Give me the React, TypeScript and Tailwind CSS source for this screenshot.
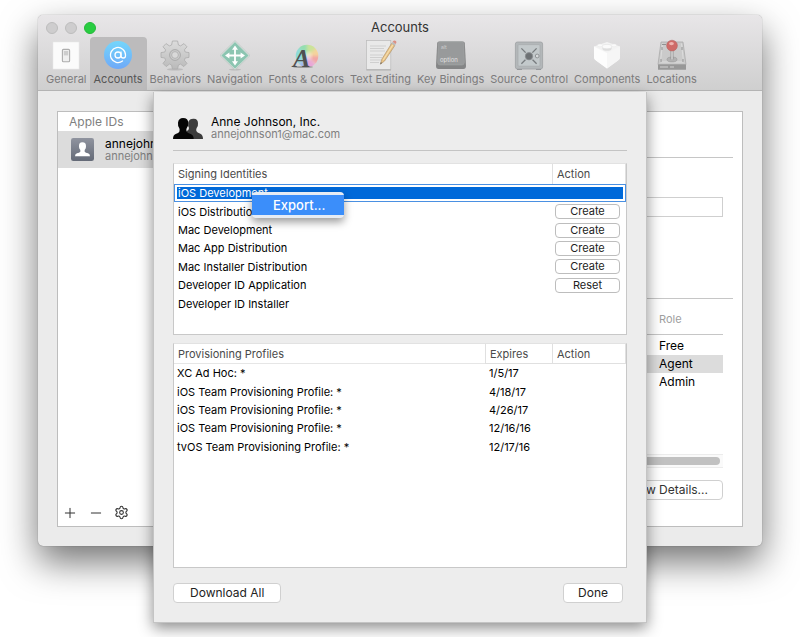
import React from 'react';
import { AtSign, Minus, Plus, Settings } from 'lucide-react';

interface ToolbarItem {
    label: string;
    icon: React.ReactNode;
    active?: boolean;
}

interface Identity {
    name: string;
    action?: string;
    selected?: boolean;
}

const GeneralIcon = () => (
    <svg viewBox="0 0 32 32" className="h-8 w-8">
        <rect x="3" y="3" width="26" height="27" fill="#fbfbfb" stroke="#e9e9e9" strokeWidth="0.6" />
        <rect x="12.4" y="10.4" width="7.2" height="12.4" rx="1" fill="#efefef" stroke="#adadad" strokeWidth="1.1" />
        <rect x="13.8" y="12" width="4.4" height="4.4" fill="#cdcdcd" />
    </svg>
);

const AccountsIcon = () => (
    <span className="m-[2px] flex h-7 w-7 items-center justify-center rounded-full bg-linear-to-b from-[#74d6fb] to-[#6fa9f8] text-white">
        <AtSign size={18} strokeWidth={1.7} />
    </span>
);

const BehaviorsIcon = () => (
    <svg viewBox="0 0 32 32" className="h-8 w-8">
        <defs>
            <linearGradient id="gear" x1="0" y1="0" x2="0" y2="1">
                <stop offset="0" stopColor="#dcdcdc" />
                <stop offset="1" stopColor="#bababa" />
            </linearGradient>
        </defs>
        <ellipse cx="16" cy="30.4" rx="8" ry="1.2" fill="#aaa" opacity="0.6" />
        <path
            d="M13.4 2 H18.6 L19.4 6 L21.6 6.900 L25 4.600 L28 7.800 L25.400 10.800 L26.200 13 L30 13.600 V18.400 L26.200 19 L25.400 21.200 L28 24.400 L24.800 27.600 L21.600 25.100 L19.400 26 L18.600 30 H13.400 L12.600 26 L10.400 25.100 L7.200 27.600 L4 24.400 L6.600 21.200 L5.800 19 L2 18.400 V13.600 L5.800 13 L6.600 10.800 L4 7.800 L7 4.600 L10.400 6.900 L12.600 6 Z"
            fill="url(#gear)"
            stroke="#acacac"
            strokeWidth="0.8"
            strokeLinejoin="round"
        />
        <circle cx="16" cy="16" r="5.4" fill="#cbcbcb" stroke="#a6a6a6" strokeWidth="0.9" />
        <circle cx="16" cy="16" r="3.4" fill="#d9d9d9" stroke="#b0b0b0" strokeWidth="0.9" />
    </svg>
);

const NavigationIcon = () => (
    <svg viewBox="0 0 32 32" className="h-8 w-8">
        <ellipse cx="16" cy="30.6" rx="6" ry="1" fill="#aaa" opacity="0.6" />
        <path d="M16 1.6 L31 16.5 L16 31 L1 16.5 Z" fill="#dce4e0" stroke="#b4bcb8" strokeWidth="0.6" strokeLinejoin="round" />
        <path d="M16 3 L29.6 16.5 L16 29.8 L2.4 16.5 Z" fill="#8cc5b1" />
        <path d="M16 9 V24 M8.5 16.5 H23.5" stroke="#fff" strokeWidth="1.8" />
        <path d="M16 6.4 L19 10.8 H13 Z M16 26.6 L13 22.2 H19 Z M6 16.5 L10.4 13.5 V19.5 Z M26 16.5 L21.6 13.5 V19.5 Z" fill="#fff" />
    </svg>
);

const FontsIcon = () => (
    <svg viewBox="0 0 32 32" className="h-8 w-8 overflow-visible">
        <defs>
            <clipPath id="wheel"><circle cx="17" cy="17" r="11.3" /></clipPath>
            <filter id="soften"><feGaussianBlur stdDeviation="1.5" /></filter>
        </defs>
        <g clipPath="url(#wheel)">
            <rect width="32" height="32" fill="#e6dcd6" />
            <g filter="url(#soften)">
                <path d="M17 17 L4 4 H17 Z" fill="#94deb0" />
                <path d="M17 17 V2 H31 V6 Z" fill="#cbe39a" />
                <path d="M17 17 L31 5 V18 Z" fill="#f4d49c" />
                <path d="M17 17 L32 17 V30 Z" fill="#f2a6a6" />
                <path d="M17 17 L29 30 H16 Z" fill="#e9a6d8" />
                <path d="M17 17 L17 31 H4 Z" fill="#9db5ee" />
                <path d="M17 17 L3 30 V3 Z" fill="#8edbd8" />
            </g>
            <circle cx="18" cy="17" r="4" fill="#fff" opacity="0.4" filter="url(#soften)" />
        </g>
        <ellipse cx="13" cy="28" rx="10" ry="1" fill="#777" opacity="0.6" />
        <text x="3" y="28" fontSize="26" fontStyle="italic" fontWeight="700" fontFamily="Liberation Serif, serif" fill="#505050">A</text>
    </svg>
);

const TextEditingIcon = () => (
    <svg viewBox="0 0 32 32" className="h-8 w-8">
        <rect x="1.4" y="1.6" width="24.4" height="29" fill="#e9e9e9" stroke="#bababa" strokeWidth="0.7" />
        <path d="M1.4 31 H26" stroke="#a4a4a4" strokeWidth="0.8" />
        <path d="M5 7 H21 M5 9.5 H19 M5 12 H20 M5 16 H18 M5 18.5 H17 M5 21 H16 M5 23.5 H14" stroke="#cfcfcf" strokeWidth="1" />
        <path d="M15.4 25.2 L16.8 20.2 L26.6 4.4 L29.8 6.6 L19.6 22 Z" fill="#e8c285" stroke="#a98c62" strokeWidth="0.6" />
        <path d="M18.2 21 L28 5.6" stroke="#f6deae" strokeWidth="1.1" />
        <path d="M26.6 4.4 L27.6 2.8 L30.8 4.9 L29.8 6.6 Z" fill="#bcbcbc" />
        <path d="M27.6 2.8 Q29 0.7 31 2 Q32 3.2 30.8 4.9 Z" fill="#db8f83" />
        <path d="M15.4 25.2 L15.9 23.2 L17 24 Z" fill="#555" />
    </svg>
);

const KeyBindingsIcon = () => (
    <svg viewBox="0 0 32 32" className="h-8 w-8">
        <path d="M4 2.4 H28 Q29.6 2.4 29.8 4 L31 27 Q31 30 28.4 30 H3.6 Q1 30 1 27 L2.2 4 Q2.4 2.4 4 2.4 Z" fill="#848586" />
        <path d="M5 2.8 H27 Q28.6 2.8 28.8 4.4 L29.4 23.6 Q29.2 26 27 26 H5 Q2.8 26 2.6 23.6 L3.2 4.4 Q3.4 2.8 5 2.8 Z" fill="#989a9b" stroke="#a6a8a8" strokeWidth="0.5" />
        <text x="6" y="9.5" fontSize="5" fontFamily="Inter, sans-serif" fill="#cfcfcf">alt</text>
        <text x="5" y="23" fontSize="6" fontFamily="Inter, sans-serif" fill="#e0e0e0">option</text>
    </svg>
);

const SourceControlIcon = () => (
    <svg viewBox="0 0 32 32" className="h-8 w-8">
        <path d="M4 29 H9 V31 H4 Z M23 29 H28 V31 H23 Z" fill="#8f9294" />
        <rect x="2.4" y="3" width="27.2" height="27" rx="2" fill="#b3b7b9" stroke="#9ea1a3" strokeWidth="0.8" />
        <rect x="5" y="5.6" width="22" height="21.6" rx="1" fill="#c3c9cb" stroke="#a6abad" strokeWidth="0.7" />
        <path d="M8.4 9.4 L23.6 24.8 M23.6 9.4 L8.4 24.8" stroke="#777b7e" strokeWidth="1.3" />
        <circle cx="16" cy="17.2" r="5" fill="#c3c9cb" />
        <circle cx="16" cy="17.2" r="3.7" fill="#6d7174" stroke="#8d9193" strokeWidth="0.8" />
        <circle cx="24.2" cy="17" r="1.9" fill="#d7dadb" stroke="#888c8f" strokeWidth="0.9" />
    </svg>
);

const ComponentsIcon = () => (
    <svg viewBox="0 0 32 32" className="h-8 w-8">
        <path d="M3 7.5 L16 3 L29 7.5 V19 Q28.6 20.4 27 21.600 L16 29.6 L5 21.6 Q3.4 20.4 3 19 Z" fill="#f3f3f3" />
        <path d="M3 7.5 L16 14 V29.6 L5 21.6 Q3.4 20.4 3 19 Z" fill="#fdfdfd" />
        <path d="M29 7.5 L16 14 V29.6 L27 21.6 Q28.6 20.4 29 19 Z" fill="#f6f6f6" />
        <ellipse cx="16" cy="9.4" rx="4.6" ry="2.4" fill="#dedede" />
        <ellipse cx="16" cy="7.6" rx="4.6" ry="2.2" fill="#fafafa" stroke="#dedede" strokeWidth="0.5" />
        <ellipse cx="9" cy="6.4" rx="2.6" ry="1.4" fill="#fafafa" stroke="#e6e6e6" strokeWidth="0.4" />
        <ellipse cx="23" cy="6.4" rx="2.6" ry="1.4" fill="#fafafa" stroke="#e6e6e6" strokeWidth="0.4" />
    </svg>
);

const LocationsIcon = () => (
    <svg viewBox="0 0 32 32" className="h-8 w-8">
        <path d="M5 3 H27 L30 25.5 H2 Z" fill="#cacaca" stroke="#a5a5a5" strokeWidth="0.7" />
        <path d="M6.5 4.5 L4.5 23 H27.5 L25.5 4.5" fill="none" stroke="#dedede" strokeWidth="0.9" />
        <rect x="2" y="25.4" width="28" height="5.4" rx="0.6" fill="#989898" />
        <path d="M4 28 H12 M14 28 H18" stroke="#b5b5b5" strokeWidth="2" />
        <path d="M6 5.5 H10 M6 8 V11 M26 8 V11 M5 20 V23 M27 20 V23" stroke="#8a8a8a" strokeWidth="0.9" />
        <ellipse cx="16" cy="20.5" rx="5" ry="2.4" fill="#b2b2b2" stroke="#999" strokeWidth="0.6" />
        <path d="M16 11 V20.5" stroke="#8a8a8a" strokeWidth="2.8" />
        <path d="M16 11 V20.5" stroke="#ececec" strokeWidth="1.2" />
        <circle cx="16" cy="6.6" r="5.4" fill="#cf6b68" stroke="#b0605e" strokeWidth="0.5" />
        <ellipse cx="15.5" cy="4.6" rx="2.4" ry="1.7" fill="#efb4b0" />
    </svg>
);

const TeamIcon = () => (
    <svg viewBox="0 0 90 63" className="h-[21px] w-[30px] shrink-0">
        <path d="M61 2 Q75 1 75 16 Q76 24 71 30 Q69 33 70 39 Q72 44 82 47 Q90 51 90 63 H40 V40 Q48 38 48 30 Q44 24 46 12 Q49 2 61 2 Z" fill="#3c3c3c" />
        <path d="M30 0 Q46 0 46 16 Q46 25 41 31 Q39 35 41 41 Q44 45 53 48 Q62 51 62 63 H0 Q0 51 8 48 Q17 45 19 41 Q21 35 19 31 Q14 25 15 14 Q17 0 30 0 Z" fill="#050505" />
    </svg>
);

const UserIcon = () => (
    <svg viewBox="0 0 69 69" className="h-[23px] w-[23px] shrink-0">
        <defs>
            <linearGradient id="user" x1="0" y1="0" x2="0" y2="1">
                <stop offset="0" stopColor="#90949f" />
                <stop offset="1" stopColor="#646a77" />
            </linearGradient>
        </defs>
        <rect width="69" height="69" rx="7" fill="url(#user)" />
        <path d="M34 13 Q46 13 45 26 Q45 32 41 36 V41 Q44 44 51 46 Q57 48 57 55 H12 Q12 48 18 46 Q25 44 28 41 V36 Q24 32 24 26 Q23 13 34 13 Z" fill="#fff" />
    </svg>
);

const toolbarItems: ToolbarItem[] = [
    { label: 'General', icon: <GeneralIcon /> },
    { label: 'Accounts', icon: <AccountsIcon />, active: true },
    { label: 'Behaviors', icon: <BehaviorsIcon /> },
    { label: 'Navigation', icon: <NavigationIcon /> },
    { label: 'Fonts & Colors', icon: <FontsIcon /> },
    { label: 'Text Editing', icon: <TextEditingIcon /> },
    { label: 'Key Bindings', icon: <KeyBindingsIcon /> },
    { label: 'Source Control', icon: <SourceControlIcon /> },
    { label: 'Components', icon: <ComponentsIcon /> },
    { label: 'Locations', icon: <LocationsIcon /> },
];

const identities: Identity[] = [
    { name: 'iOS Development', selected: true },
    { name: 'iOS Distribution', action: 'Create' },
    { name: 'Mac Development', action: 'Create' },
    { name: 'Mac App Distribution', action: 'Create' },
    { name: 'Mac Installer Distribution', action: 'Create' },
    { name: 'Developer ID Application', action: 'Reset' },
    { name: 'Developer ID Installer' },
];

const profiles = [
    { name: 'XC Ad Hoc: *', expires: '1/5/17' },
    { name: 'iOS Team Provisioning Profile: *', expires: '4/18/17' },
    { name: 'iOS Team Provisioning Profile: *', expires: '4/26/17' },
    { name: 'iOS Team Provisioning Profile: *', expires: '12/16/16' },
    { name: 'tvOS Team Provisioning Profile: *', expires: '12/17/16' },
];

const TitleBar = () => (
    <header className="rounded-t-[5px] border-b border-[#b4b4b4] bg-linear-to-b from-[#e8e6e8] to-[#cfcfcf]">
        <div className="relative flex h-[22px] items-center justify-center pt-1">
            <div className="absolute left-2 flex gap-[7px]">
                <button aria-label="Close" className="h-3 w-3 rounded-full border border-[#bdbdbd] bg-[#cecdce]" />
                <button aria-label="Minimize" className="h-3 w-3 rounded-full border border-[#bdbdbd] bg-[#cecdce]" />
                <button aria-label="Zoom" className="h-3 w-3 rounded-full border border-[#24b93a] bg-[#28cd41]" />
            </div>
            <h1 className="text-[13px] text-[#333]">Accounts</h1>
        </div>
        <nav className="flex pl-[5px]">
            {toolbarItems.map(item => (
                <button
                    key={item.label}
                    className={
                        item.active
                            ? 'flex flex-col items-center rounded-t-[4px] bg-[#bcbbbc] px-1 pt-[2px] pb-[2px] text-[11px] leading-[17px] text-[#555]'
                            : 'flex flex-col items-center px-[3px] pt-[2px] pb-[2px] text-[11px] leading-[17px] text-[#7c7b7c]'
                    }
                >
                    {item.icon}
                    <span className="whitespace-nowrap">{item.label}</span>
                </button>
            ))}
        </nav>
    </header>
);

const AccountList = () => (
    <aside className="flex w-[180px] flex-col border border-[#bdbdbd] bg-white">
        <h2 className="pt-px pl-[11px] text-[12px] leading-[18px] text-[#808080]">Apple IDs</h2>
        <div className="flex h-[37px] items-center gap-[11px] bg-[#dcdcdc] pl-[13px]">
            <UserIcon />
            <div>
                <p className="text-[12px] leading-[13px] text-black">annejohnson1</p>
                <p className="text-[11px] leading-[13px] text-[#808080]">annejohnson1@mac.com</p>
            </div>
        </div>
        <div className="mt-auto flex items-center gap-[10px] px-1 pb-[5px] text-[#333]">
            <button aria-label="Add account"><Plus size={16} strokeWidth={1.5} /></button>
            <button aria-label="Remove account"><Minus size={16} strokeWidth={1.5} /></button>
            <button aria-label="Account options"><Settings size={15} strokeWidth={1.7} /></button>
        </div>
    </aside>
);

const AccountDetail = () => (
    <section className="flex-1 border border-l-0 border-[#bdbdbd] bg-white pr-[9px] pb-[26px]">
        <div className="h-[46px] border-b border-[#c6c6c6]" />
        <div className="h-[141px] border-b border-[#c6c6c6] pt-[39px] pr-[10px]">
            <label className="flex items-center gap-2 pl-10 text-[12px]">
                Description
                <input type="text" className="h-5 min-w-0 flex-1 border border-[#cfcfcf] bg-white" />
            </label>
        </div>
        <div className="pr-[10px]">
            <table className="w-full text-left">
                <thead>
                    <tr className="h-[35px] border-b border-[#c6c6c6] text-[11px] text-[#a0a0a0]">
                        <th className="pt-[6px] font-normal">Team Name</th>
                        <th className="w-16 pt-[6px] font-normal">Role</th>
                    </tr>
                </thead>
                <tbody className="text-[12px] leading-[18px] text-black">
                    <tr>
                        <td className="pt-[2px]"></td>
                        <td className="pt-[2px]">Free</td>
                    </tr>
                    <tr className="bg-[#dcdcdc]">
                        <td></td>
                        <td>Agent</td>
                    </tr>
                    <tr>
                        <td></td>
                        <td>Admin</td>
                    </tr>
                </tbody>
            </table>
            <div className="mt-[63px] border-y border-[#ececec] bg-[#fafafa] px-[3px] py-[2px]">
                <div className="h-2 rounded-full bg-[#c1c1c1]" />
            </div>
            <div className="mt-3 flex justify-end">
                <button className="h-5 rounded-[4px] border border-[#d0d0d0] bg-white px-[14px] text-[12px] leading-[18px] text-[#333]">
                    View Details...
                </button>
            </div>
        </div>
    </section>
);

const ContextMenu = () => (
    <div className="absolute top-7 left-[78px] w-[92px] rounded-[4px] bg-[#e6ecf4] py-[3px] shadow-[0_4px_9px_rgba(0,0,0,0.4)]">
        <button className="block h-5 w-full bg-[#3b8efa] pl-[21px] text-left text-[13px] leading-5 font-medium text-white">Export...</button>
    </div>
);

const IdentityTable = () => (
    <div className="relative min-h-[172px] border border-[#c8c8c8] border-t-[#e2e2e2] bg-white">
        <table className="w-full border-separate border-spacing-0 text-left text-[11px] leading-[14px]">
            <thead className="text-[#4a4a4a]">
                <tr className="h-5">
                    <th className="pl-1 font-normal">Signing Identities</th>
                    <th className="w-[74px] border-x border-[#e0e0e0] pl-1 font-normal">Action</th>
                </tr>
            </thead>
        </table>
        <table className="h-[129px] w-full border-separate border-spacing-0 text-left text-[11px] leading-[14px] text-black">
            <tbody>
                {identities.map(identity => identity.selected ? (
                    <tr key={identity.name} className="h-[18px] outline-1 -outline-offset-1 outline-[#4a90e2]">
                        <td className="p-0 pl-[3px]">
                            <div className="h-3 bg-[#0069d9] pl-px leading-3 text-white">{identity.name}</div>
                        </td>
                        <td className="w-[74px] p-0 pr-[3px]">
                            <div className="h-3 bg-[#0069d9]" />
                        </td>
                    </tr>
                ) : (
                    <tr key={identity.name} className="h-[18px]">
                        <td className="p-0 pl-1">{identity.name}</td>
                        <td className="w-[74px] p-0 pl-[3px]">
                            {identity.action && (
                                <button className="block h-[15px] w-[65px] rounded-[4px] border border-[#bdbdbd] bg-white text-[11px] leading-[13px] text-[#222]">
                                    {identity.action}
                                </button>
                            )}
                        </td>
                    </tr>
                ))}
            </tbody>
        </table>
        <ContextMenu />
    </div>
);

const ProfileTable = () => (
    <div className="min-h-[225px] border border-[#c8c8c8] border-t-[#e2e2e2] bg-white">
        <table className="h-[112px] w-full border-separate border-spacing-0 text-left text-[11px] leading-[14px] text-black">
            <thead className="text-[#4a4a4a]">
                <tr className="h-5">
                    <th className="border-b border-[#e6e6e6] pl-1 font-normal">Provisioning Profiles</th>
                    <th className="w-[67px] border-b border-l border-[#e0e0e0] pl-1 font-normal">Expires</th>
                    <th className="w-[74px] border-x border-b border-[#e0e0e0] pl-1 font-normal">Action</th>
                </tr>
            </thead>
            <tbody>
                {profiles.map((profile, index) => (
                    <tr key={index}>
                        <td className="p-0 pl-[3px]">{profile.name}</td>
                        <td className="p-0 pl-1">{profile.expires}</td>
                        <td className="p-0" />
                    </tr>
                ))}
            </tbody>
        </table>
    </div>
);

const AccountSheet = () => (
    <div className="absolute inset-x-[115px] top-[77px] border border-t-0 border-[#c4c4c4] bg-[#ededed] px-[19px] pt-[23px] pb-[19px] shadow-[0_5px_14px_rgba(0,0,0,0.45)]">
        <div className="flex items-center gap-2 border-b border-[#c4c4c4] pb-[9px]">
            <TeamIcon />
            <div>
                <h2 className="text-[12px] leading-[13px] text-black">Anne Johnson, Inc.</h2>
                <p className="text-[11px] leading-[13px] text-[#808080]">annejohnson1@mac.com</p>
            </div>
        </div>
        <div className="mt-3 flex flex-col gap-2">
            <IdentityTable />
            <ProfileTable />
        </div>
        <div className="mt-[15px] flex justify-between pr-1">
            <button className="h-5 rounded-[4px] border border-[#d0d0d0] bg-white px-4 text-[12px] leading-[18px] text-[#222]">
                Download All
            </button>
            <button className="h-5 rounded-[4px] border border-[#d0d0d0] bg-white px-[14px] text-[12px] leading-[18px] text-[#222]">
                Done
            </button>
        </div>
    </div>
);

const App: React.FC = () => {
    return (
        <div className="min-h-screen overflow-hidden bg-white px-[38px] pt-[15px] font-['Inter',sans-serif]">
            <main className="relative rounded-[5px] bg-[#ebebeb] shadow-[0_0_1px_rgba(0,0,0,0.5),0_16px_36px_rgba(0,0,0,0.55)]">
                <TitleBar />
                <div className="flex px-[19px] pt-5 pb-[19px]">
                    <AccountList />
                    <AccountDetail />
                </div>
                <AccountSheet />
            </main>
        </div>
    );
};

export default App;
